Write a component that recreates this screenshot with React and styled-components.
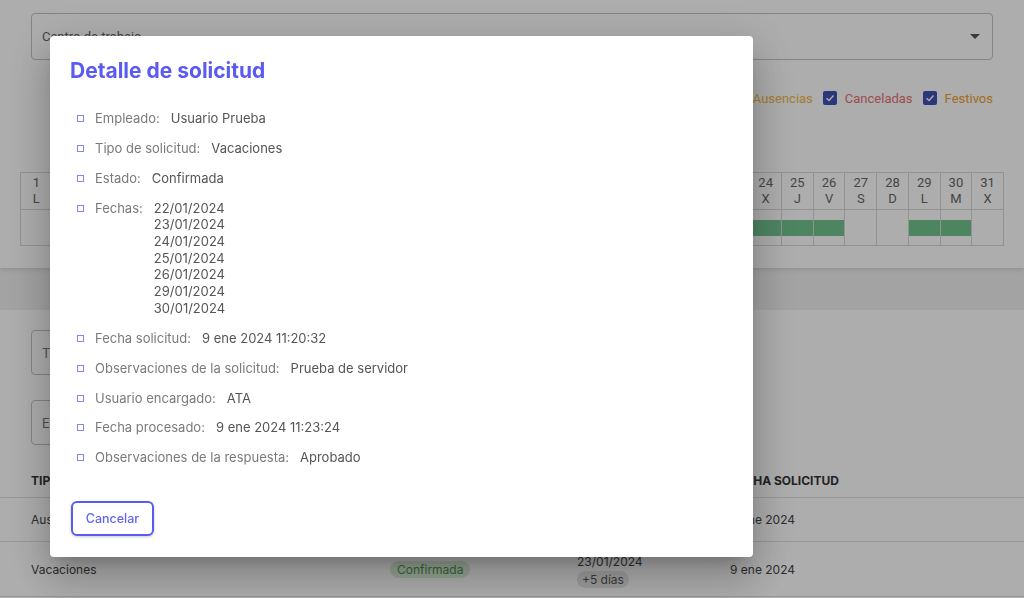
import React from "react";
import styled, { createGlobalStyle } from "styled-components";

const GlobalStyle = createGlobalStyle`
  html, body {
    margin: 0;
    padding: 0;
    background: #f0f0f0;
    font-family: "Inter", "Liberation Sans", sans-serif;
    overflow: hidden;
  }
`;

const Page = styled.div`
  width: 1024px;
  height: 598px;
  display: flex;
  flex-direction: column;
  gap: 42px;
`;

const TopCard = styled.section`
  background: #ffffff;
  padding: 13px 20px 22px;
  box-shadow: 0 2px 4px rgba(0, 0, 0, 0.1);
  font-family: "Roboto", "Liberation Sans", sans-serif;
`;

const SelectBox = styled.div`
  margin: 0 11px;
  height: 47px;
  box-sizing: border-box;
  border: 1px solid #c4c4c4;
  border-radius: 4px;
  display: flex;
  align-items: center;
  justify-content: space-between;
  padding: 0 10px;
  color: #666;
  font-size: 13px;
`;

const Caret = styled.span`
  width: 0;
  height: 0;
  border-left: 5px solid transparent;
  border-right: 5px solid transparent;
  border-top: 5px solid #555;
  margin-right: 2px;
`;

const LegendRow = styled.div`
  display: flex;
  justify-content: flex-end;
  align-items: center;
  gap: 10px;
  margin: 26px 11px 0;
  height: 24px;
`;

const LegendItem = styled.label`
  display: flex;
  align-items: center;
  gap: 8px;
  font-size: 13px;
  color: ${(p) => p.color};
`;

const Box = styled.span`
  width: 14px;
  height: 14px;
  background: #3f51b5;
  border-radius: 2px;
  display: flex;
  align-items: center;
  justify-content: center;
`;

const Calendar = styled.div`
  margin-top: 62px;
  display: grid;
  grid-template-columns: repeat(31, 1fr);
  border-left: 1px solid #d8d8d8;
  border-top: 1px solid #d8d8d8;
`;

const DayHead = styled.div`
  height: 36px;
  border-right: 1px solid #d8d8d8;
  border-bottom: 1px solid #d8d8d8;
  display: flex;
  flex-direction: column;
  align-items: center;
  justify-content: center;
  font-size: 13px;
  line-height: 16px;
  color: #666;
`;

const DayCell = styled.div`
  height: 35px;
  border-right: 1px solid #d8d8d8;
  border-bottom: 1px solid #d8d8d8;
  display: flex;
  align-items: center;
`;

const Bar = styled.div`
  width: 100%;
  height: 16px;
  background: #72c48f;
`;

const BottomCard = styled.section`
  background: #ffffff;
  flex: 1;
  padding-top: 20px;
`;

const Filters = styled.div`
  display: flex;
  flex-direction: column;
  gap: 25px;
  padding-left: 31px;
  margin-bottom: 18px;
`;

const Field = styled.div`
  width: 330px;
  height: 45px;
  box-sizing: border-box;
  border: 1px solid #c4c4c4;
  border-radius: 4px;
  display: flex;
  align-items: center;
  padding: 0 10px;
  font-size: 13px;
  color: #777;
`;

const Row = styled.div`
  display: grid;
  grid-template-columns: 359px 187px 153px 1fr;
  padding-left: 31px;
  align-items: center;
  box-sizing: border-box;
  height: ${(p) => p.h}px;
  border-bottom: 1px solid #e0e0e0;
  font-size: 12px;
  color: ${(p) => (p.head ? "#333" : "#444")};
  font-weight: ${(p) => (p.head ? 700 : 400)};
`;

const Chip = styled.span`
  display: inline-block;
  padding: 1px ${(p) => p.px || 8}px;
  border-radius: 9px;
  background: ${(p) => p.bg};
  color: ${(p) => p.fg};
  font-size: 12px;
`;

const Dates = styled.div`
  display: flex;
  flex-direction: column;
  align-items: flex-start;
  gap: 2px;
  padding-top: 4px;
`;

const Overlay = styled.div`
  position: fixed;
  inset: 0;
  background: rgba(0, 0, 0, 0.32);
  padding: 36px 0 0 50px;
`;

const Dialog = styled.div`
  width: 703px;
  height: 521px;
  box-sizing: border-box;
  background: #ffffff;
  border-radius: 4px;
  padding: 20px 20px 21px;
  display: flex;
  flex-direction: column;
  box-shadow: 0 11px 15px -7px rgba(0, 0, 0, 0.2),
    0 24px 38px 3px rgba(0, 0, 0, 0.14), 0 9px 46px 8px rgba(0, 0, 0, 0.12);
`;

const Title = styled.h2`
  margin: 0;
  font-family: "Inter", "Liberation Sans", sans-serif;
  font-size: 21px;
  line-height: 30px;
  font-weight: 700;
  color: #5b5bf1;
`;

const List = styled.ul`
  list-style: none;
  margin: 24px 0 0;
  padding: 0 0 0 7px;
  display: flex;
  flex-direction: column;
  gap: 13.2px;
  flex: 1;
`;

const Item = styled.li`
  display: flex;
  align-items: flex-start;
  font-size: 13px;
  line-height: 16.7px;
`;

const Bullet = styled.span`
  width: 5px;
  height: 5px;
  border: 1.3px solid #8585f2;
  margin: 5px 11px 0 0;
  flex: none;
`;

const Label = styled.span`
  color: #7a7a7a;
  margin-right: 11px;
`;

const Value = styled.span`
  color: #555;
  display: flex;
  flex-direction: column;
`;

const CancelButton = styled.button`
  align-self: flex-start;
  margin-left: 1px;
  width: 83px;
  height: 35px;
  background: #fff;
  border: 2px solid #5b5bf1;
  border-radius: 6px;
  color: #6363f2;
  font-family: "Inter", "Liberation Sans", sans-serif;
  font-size: 12.5px;
  font-weight: 500;
  box-shadow: 0 1px 3px rgba(0, 0, 0, 0.2);
`;

const days = ["L", "M", "X", "J", "V", "S", "D"];
const booked = [22, 23, 24, 25, 26, 29, 30];

const detail = [
  ["Empleado:", "Usuario Prueba"],
  ["Tipo de solicitud:", "Vacaciones"],
  ["Estado:", "Confirmada"],
  [
    "Fechas:",
    [
      "22/01/2024",
      "23/01/2024",
      "24/01/2024",
      "25/01/2024",
      "26/01/2024",
      "29/01/2024",
      "30/01/2024",
    ],
  ],
  ["Fecha solicitud:", "9 ene 2024 11:20:32"],
  ["Observaciones de la solicitud:", "Prueba de servidor"],
  ["Usuario encargado:", "ATA"],
  ["Fecha procesado:", "9 ene 2024 11:23:24"],
  ["Observaciones de la respuesta:", "Aprobado"],
];

function Check() {
  return (
    <Box>
      <svg width="10" height="10" viewBox="0 0 10 10">
        <path d="M1.5 5.2 L4 7.5 L8.5 2.5" fill="none" stroke="#fff" strokeWidth="1.4" />
      </svg>
    </Box>
  );
}

export default function App() {
  const month = Array.from({ length: 31 }, (_, i) => i + 1);
  return (
    <>
      <GlobalStyle />
      <Page>
        <TopCard>
          <SelectBox>
            <span>Centro de trabajo</span>
            <Caret />
          </SelectBox>
          <LegendRow>
            <LegendItem color="#4caf50">
              <Check />
              Vacaciones
            </LegendItem>
            <LegendItem color="#f2b84b">
              <Check />
              Ausencias
            </LegendItem>
            <LegendItem color="#e57373">
              <Check />
              Canceladas
            </LegendItem>
            <LegendItem color="#f0a030">
              <Check />
              Festivos
            </LegendItem>
          </LegendRow>
          <Calendar>
            {month.map((d) => (
              <DayHead key={"h" + d}>
                <span>{d}</span>
                <span>{days[(d - 1) % 7]}</span>
              </DayHead>
            ))}
            {month.map((d) => (
              <DayCell key={"c" + d}>{booked.includes(d) && <Bar />}</DayCell>
            ))}
          </Calendar>
        </TopCard>

        <BottomCard>
          <Filters>
            <Field>Tipo de solicitud</Field>
            <Field>Estado</Field>
          </Filters>
          <Row head h={35}>
            <span>TIPO DE SOLICITUD</span>
            <span>ESTADO</span>
            <span>FECHAS</span>
            <span>FECHA SOLICITUD</span>
          </Row>
          <Row h={44}>
            <span>Ausencia</span>
            <span>
              <Chip bg="#dcefd9" fg="#4b9a4f">Confirmada</Chip>
            </span>
            <span>10/01/2024</span>
            <span>9 ene 2024</span>
          </Row>
          <Row h={55}>
            <span>Vacaciones</span>
            <span>
              <Chip bg="#dcefd9" fg="#4b9a4f" px={7}>Confirmada</Chip>
            </span>
            <Dates>
              <span>23/01/2024</span>
              <Chip bg="#e6e6e6" fg="#555" px={5}>+5 días</Chip>
            </Dates>
            <span>9 ene 2024</span>
          </Row>
        </BottomCard>
      </Page>

      <Overlay>
        <Dialog>
          <Title>Detalle de solicitud</Title>
          <List>
            {detail.map(([label, value]) => (
              <Item key={label}>
                <Bullet />
                <Label>{label}</Label>
                <Value>
                  {Array.isArray(value)
                    ? value.map((v) => <span key={v}>{v}</span>)
                    : value}
                </Value>
              </Item>
            ))}
          </List>
          <CancelButton>Cancelar</CancelButton>
        </Dialog>
      </Overlay>
    </>
  );
}
